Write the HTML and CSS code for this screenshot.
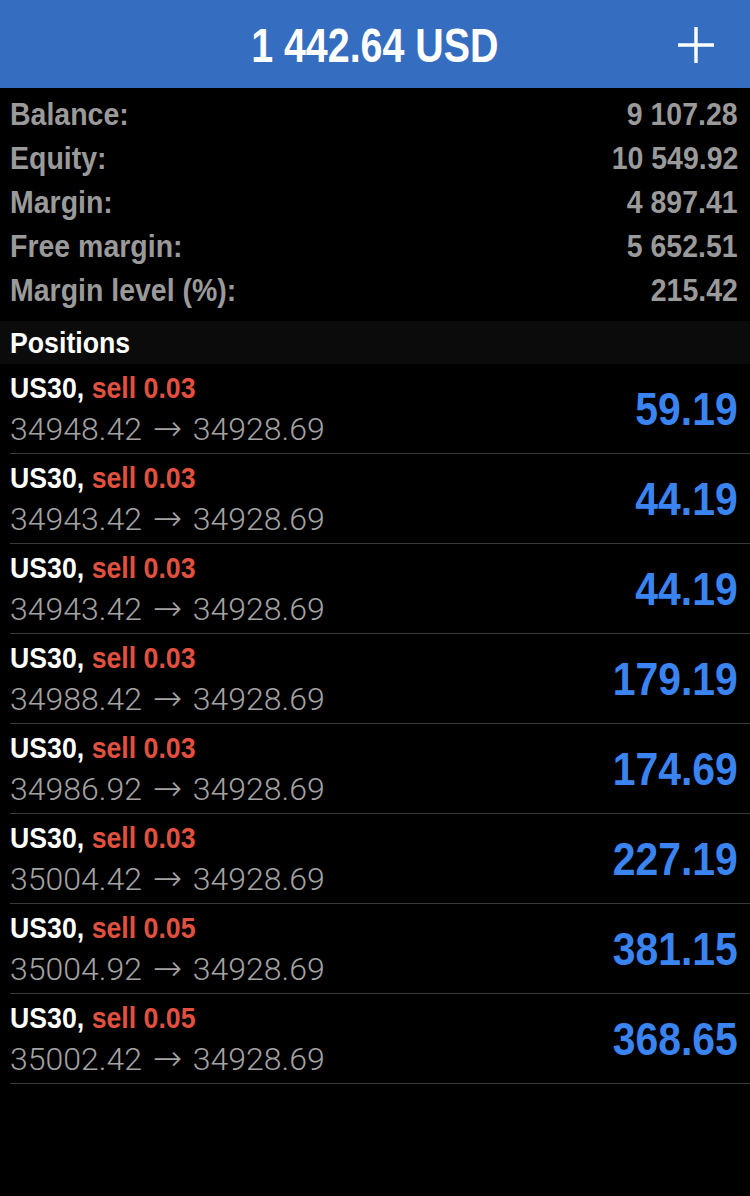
FILE: index.html
```html
<!DOCTYPE html>
<html>
<head>
<meta charset="utf-8">
<link rel="stylesheet" href="styles.css">
</head>
<body>
<div class="app">
  <header class="topbar">
    <div class="title"><span class="cond c">1 442.64 USD</span></div>
    <svg class="plus" width="36" height="36" viewBox="0 0 36 36"><path d="M18 0V36M0 18H36" stroke="#fff" stroke-width="3.4"/></svg>
  </header>
  <section class="summary">
    <div class="srow"><span class="cond">Balance:</span><span class="cond r">9 107.28</span></div>
    <div class="srow"><span class="cond">Equity:</span><span class="cond r">10 549.92</span></div>
    <div class="srow"><span class="cond">Margin:</span><span class="cond r">4 897.41</span></div>
    <div class="srow"><span class="cond">Free margin:</span><span class="cond r">5 652.51</span></div>
    <div class="srow"><span class="cond">Margin level (%):</span><span class="cond r">215.42</span></div>
  </section>
  <div class="section-head"><span class="cond">Positions</span></div>
  <section class="positions">
    <div class="pos"><div class="info"><div class="l1"><span class="cond">US30, <span class="sell">sell 0.03</span></span></div><div class="l2">34948.42 <span class="arrow">→</span> 34928.69</div></div><div class="profit"><span class="cond r">59.19</span></div></div>
    <div class="pos"><div class="info"><div class="l1"><span class="cond">US30, <span class="sell">sell 0.03</span></span></div><div class="l2">34943.42 <span class="arrow">→</span> 34928.69</div></div><div class="profit"><span class="cond r">44.19</span></div></div>
    <div class="pos"><div class="info"><div class="l1"><span class="cond">US30, <span class="sell">sell 0.03</span></span></div><div class="l2">34943.42 <span class="arrow">→</span> 34928.69</div></div><div class="profit"><span class="cond r">44.19</span></div></div>
    <div class="pos"><div class="info"><div class="l1"><span class="cond">US30, <span class="sell">sell 0.03</span></span></div><div class="l2">34988.42 <span class="arrow">→</span> 34928.69</div></div><div class="profit"><span class="cond r">179.19</span></div></div>
    <div class="pos"><div class="info"><div class="l1"><span class="cond">US30, <span class="sell">sell 0.03</span></span></div><div class="l2">34986.92 <span class="arrow">→</span> 34928.69</div></div><div class="profit"><span class="cond r">174.69</span></div></div>
    <div class="pos"><div class="info"><div class="l1"><span class="cond">US30, <span class="sell">sell 0.03</span></span></div><div class="l2">35004.42 <span class="arrow">→</span> 34928.69</div></div><div class="profit"><span class="cond r">227.19</span></div></div>
    <div class="pos"><div class="info"><div class="l1"><span class="cond">US30, <span class="sell">sell 0.05</span></span></div><div class="l2">35004.92 <span class="arrow">→</span> 34928.69</div></div><div class="profit"><span class="cond r">381.15</span></div></div>
    <div class="pos"><div class="info"><div class="l1"><span class="cond">US30, <span class="sell">sell 0.05</span></span></div><div class="l2">35002.42 <span class="arrow">→</span> 34928.69</div></div><div class="profit"><span class="cond r">368.65</span></div></div>
  </section>
</div>
</body>
</html>
```
FILE: styles.css
```css
html, body {
  margin: 0;
  padding: 0;
  background: #000;
}
.app {
  width: 750px;
  height: 1196px;
  background: #000;
  font-family: "Liberation Sans", Arial, sans-serif;
  font-weight: bold;
  overflow: hidden;
}
.cond {
  display: inline-block;
  white-space: nowrap;
  transform: scaleX(0.89);
  transform-origin: left center;
}
.cond.r {
  transform-origin: right center;
}
.cond.c {
  transform-origin: center center;
  transform: scaleX(0.82);
}
.topbar {
  height: 88px;
  background: #356ec0;
  display: flex;
  align-items: center;
  justify-content: center;
  position: relative;
}
.title {
  color: #fff;
  font-size: 48px;
  line-height: 1;
  padding-top: 3px;
}
.plus {
  position: absolute;
  right: 36px;
  top: 27px;
}
.summary {
  padding: 4px 12px 9px 10px;
}
.srow {
  display: flex;
  justify-content: space-between;
  height: 44px;
  align-items: center;
  color: #9a9a9a;
  font-size: 32px;
}
.section-head {
  background: #0b0b0b;
  height: 43px;
  display: flex;
  align-items: center;
  padding-left: 10px;
  color: #fff;
  font-size: 30px;
}
.pos {
  margin-left: 10px;
  padding-right: 12px;
  height: 89px;
  border-bottom: 1px solid #3a3a3a;
  display: flex;
  align-items: center;
  justify-content: space-between;
}
.info {
  display: flex;
  flex-direction: column;
  gap: 4px;
}
.l1 {
  color: #fff;
  font-size: 30px;
  line-height: 36px;
}
.sell {
  color: #e2503f;
}
.l2 {
  color: #a3a3a3;
  font-family: Roboto, "Liberation Sans", sans-serif;
  font-weight: 300;
  font-size: 32px;
  line-height: 36px;
  white-space: nowrap;
}
.arrow {
  font-family: "DejaVu Sans", sans-serif;
  font-weight: 200;
  font-size: 35px;
  margin: 0 3px;
}
.profit {
  color: #3a84f2;
  font-size: 47px;
  line-height: 1;
}
.profit .cond {
  transform: scaleX(0.87);
}
```
